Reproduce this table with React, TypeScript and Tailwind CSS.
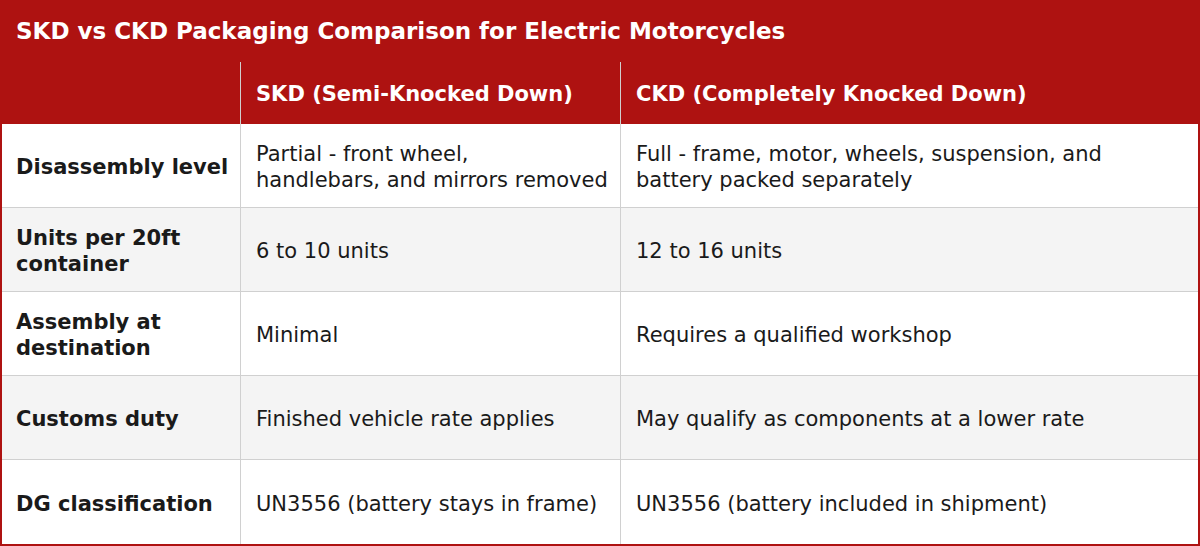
import React from 'react';

const rows: [string, string, string][] = [
  ['Disassembly level', 'Partial - front wheel,\nhandlebars, and mirrors removed', 'Full - frame, motor, wheels, suspension, and battery packed separately'],
  ['Units per 20ft container', '6 to 10 units', '12 to 16 units'],
  ['Assembly at destination', 'Minimal', 'Requires a qualified workshop'],
  ['Customs duty', 'Finished vehicle rate applies', 'May qualify as components at a lower rate'],
  ['DG classification', 'UN3556 (battery stays in frame)', 'UN3556 (battery included in shipment)'],
];

export default function App() {
  return (
    <div
      className="w-[1200px] h-[546px] flex flex-col border-2 border-t-0 border-[#ae1211] bg-white text-[#1a1a1a]"
      style={{ fontFamily: '"DejaVu Sans", Verdana, sans-serif' }}
    >
      <div className="bg-[#ae1211] -mx-[2px]">
        <div className="h-[62px] flex items-center px-4 text-white text-[23px] font-bold">
          SKD vs CKD Packaging Comparison for Electric Motorcycles
        </div>
        <div className="h-[62px] grid grid-cols-[240px_380px_1fr] text-white text-[21px] font-bold">
          <div />
          <div className="flex items-center border-l border-[#cfcfcf] pl-[15px] pt-[3px]">SKD (Semi-Knocked Down)</div>
          <div className="flex items-center border-l border-[#cfcfcf] pl-[15px] pt-[3px]">CKD (Completely Knocked Down)</div>
        </div>
      </div>
      <div className="flex-1 flex flex-col">
        {rows.map((r, i) => (
          <div
            key={i}
            className={
              'grid grid-cols-[238px_380px_1fr] text-[21px] leading-[26px] ' +
              (i === 0 ? 'h-[83px] ' : 'border-t border-[#d0d0d0] ') +
              (i === rows.length - 1 ? 'flex-1 ' : i > 0 ? 'h-[84px] ' : '') +
              (i % 2 === 1 ? 'bg-[#f4f4f4]' : 'bg-white')
            }
          >
            <div className="flex items-center pl-[14px] pr-2 pt-[3px] font-bold">{r[0]}</div>
            <div className="flex items-center border-l border-[#d0d0d0] pl-[15px] pr-1 pt-[3px] whitespace-pre-line">{r[1]}</div>
            <div className="flex items-center border-l border-[#d0d0d0] pl-[15px] pr-4 pt-[3px]">{r[2]}</div>
          </div>
        ))}
      </div>
    </div>
  );
}
